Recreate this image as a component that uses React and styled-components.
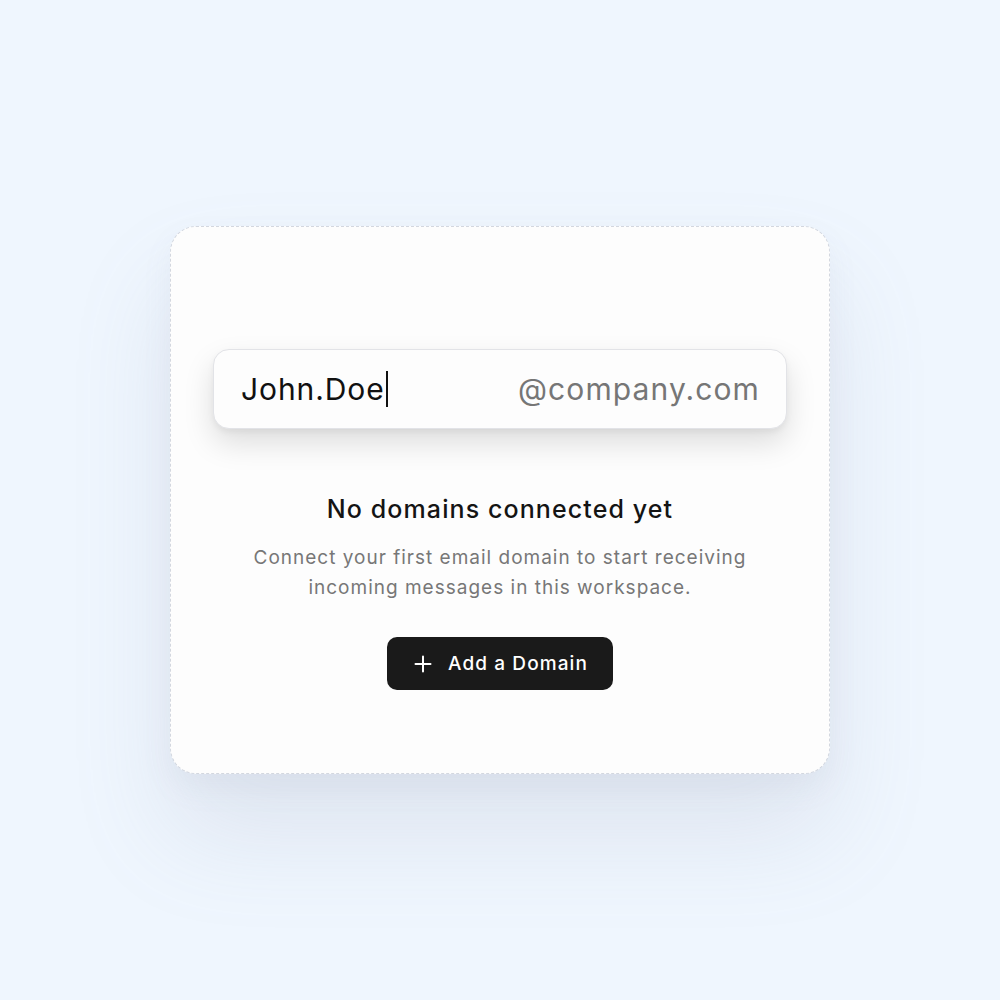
import React from "react";
import styled, { createGlobalStyle } from "styled-components";

const GlobalStyle = createGlobalStyle`
  html, body {
    margin: 0;
    padding: 0;
    background: #eff6fe;
  }
  body {
    font-family: Inter, "Noto Sans", sans-serif;
  }
`;

const StyledPage = styled.main`
  width: 1000px;
  height: 1000px;
  display: flex;
  align-items: center;
  justify-content: center;
`;

const StyledCard = styled.section`
  box-sizing: border-box;
  width: 660px;
  height: 548px;
  padding: 122px 42px 0;
  display: flex;
  flex-direction: column;
  align-items: center;
  background: #fdfdfd;
  border: 1.5px dashed #d3d7df;
  border-radius: 26px;
  box-shadow: 0 60px 100px rgba(135, 145, 165, 0.16),
    0 14px 30px rgba(135, 145, 165, 0.08);
`;

const StyledField = styled.div`
  box-sizing: border-box;
  width: 574px;
  height: 80px;
  display: flex;
  align-items: center;
  justify-content: space-between;
  padding: 0 26px 0 27px;
  background: #fdfdfd;
  border: 1.5px solid #e2e3e7;
  border-radius: 16px;
  box-shadow: 0 14px 30px rgba(0, 0, 0, 0.13), 0 3px 6px rgba(0, 0, 0, 0.05);
  font-size: 30px;
  letter-spacing: 0.9px;
`;

const StyledTyped = styled.span`
  display: flex;
  align-items: center;
  color: #111111;
`;

const StyledCaret = styled.span`
  width: 2px;
  height: 36px;
  margin-left: 1px;
  background: #111111;
`;

const StyledSuffix = styled.span`
  color: #767676;
  letter-spacing: 1.1px;
`;

const StyledTitle = styled.h2`
  margin: 64px 0 0;
  font-size: 25px;
  font-weight: 500;
  letter-spacing: 1.1px;
  color: #141414;
  line-height: 32px;
`;

const StyledText = styled.p`
  margin: 18px 0 0;
  font-size: 19px;
  line-height: 30px;
  letter-spacing: 1px;
  color: #777777;
  text-align: center;
`;

const StyledButton = styled.button`
  margin-top: 34px;
  height: 53px;
  padding: 0 25px 0 27px;
  display: flex;
  align-items: center;
  gap: 16px;
  background: #1a1a1a;
  color: #ffffff;
  border: none;
  border-radius: 10px;
  font-family: Inter, "Noto Sans", sans-serif;
  font-size: 19px;
  font-weight: 500;
  letter-spacing: 1.1px;
  cursor: pointer;
`;

const PlusIcon = () => (
  <svg width="18" height="18" viewBox="0 0 18 18" fill="none">
    <path d="M9 1.5v15M1.5 9h15" stroke="#fff" strokeWidth="2" strokeLinecap="round" />
  </svg>
);

const App = () => {
  return (
    <StyledPage>
      <GlobalStyle />
      <StyledCard>
        <StyledField>
          <StyledTyped>
            John.Doe
            <StyledCaret />
          </StyledTyped>
          <StyledSuffix>@company.com</StyledSuffix>
        </StyledField>
        <StyledTitle>No domains connected yet</StyledTitle>
        <StyledText>
          Connect your first email domain to start receiving
          <br />
          incoming messages in this workspace.
        </StyledText>
        <StyledButton>
          <PlusIcon />
          Add a Domain
        </StyledButton>
      </StyledCard>
    </StyledPage>
  );
};

export default App;
